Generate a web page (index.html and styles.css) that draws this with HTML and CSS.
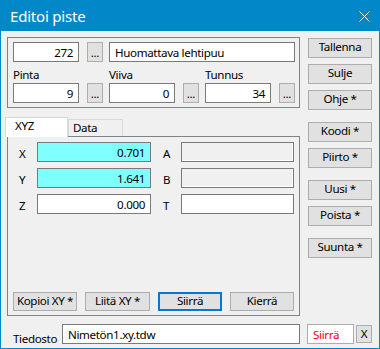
FILE: index.html
```html
<!DOCTYPE html>
<html>
<head>
<meta charset="utf-8">
<link rel="stylesheet" href="styles.css">
</head>
<body>
<div class="window">
  <div class="titlebar">
    <span class="title">Editoi piste</span>
    <svg class="close" width="11" height="11" viewBox="0 0 11 11"><path d="M0.5 0.5 L10.5 10.5 M10.5 0.5 L0.5 10.5" stroke="#fff" stroke-width="1" fill="none"/></svg>
  </div>
  <div class="frame">
    <div class="main">
      <div class="left">
        <div class="group">
          <div class="row1">
            <div class="field num w66">272</div>
            <div class="btn dots">...</div>
            <div class="field name">Huomattava lehtipuu</div>
          </div>
          <div class="row2">
            <div class="col">
              <div class="lbl">Pinta</div>
              <div class="pair"><div class="field num w66">9</div><div class="btn dots">...</div></div>
            </div>
            <div class="col">
              <div class="lbl">Viiva</div>
              <div class="pair"><div class="field num w66">0</div><div class="btn dots">...</div></div>
            </div>
            <div class="col">
              <div class="lbl">Tunnus</div>
              <div class="pair"><div class="field num w66">34</div><div class="btn dots">...</div></div>
            </div>
          </div>
        </div>
        <div class="tabs">
          <div class="tabstrip">
            <div class="tab active">XYZ</div>
            <div class="tab">Data</div>
          </div>
          <div class="panel">
            <div class="coords">
              <div class="clbl">X</div><div class="field num cyan">0.701</div>
              <div class="clbl lb2">A</div><div class="field dis"></div>
              <div class="clbl">Y</div><div class="field num cyan">1.641</div>
              <div class="clbl lb2">B</div><div class="field dis"></div>
              <div class="clbl">Z</div><div class="field num">0.000</div>
              <div class="clbl lb2">T</div><div class="field"></div>
            </div>
            <div class="pbtns">
              <div class="btn pb">Kopioi XY *</div>
              <div class="btn pb w65">Liitä XY *</div>
              <div class="btn pb focus">Siirrä</div>
              <div class="btn pb">Kierrä</div>
            </div>
          </div>
        </div>
      </div>
      <div class="right">
        <div class="bgroup">
          <div class="btn rb">Tallenna</div>
          <div class="btn rb">Sulje</div>
          <div class="btn rb">Ohje *</div>
        </div>
        <div class="bgroup">
          <div class="btn rb">Koodi *</div>
          <div class="btn rb">Piirto *</div>
        </div>
        <div class="bgroup">
          <div class="btn rb">Uusi *</div>
          <div class="btn rb">Poista *</div>
        </div>
        <div class="bgroup">
          <div class="btn rb">Suunta *</div>
        </div>
      </div>
    </div>
    <div class="footer">
      <div class="flbl">Tiedosto</div>
      <div class="field file">Nimetön1.xy.tdw</div>
      <div class="redbox">Siirrä</div>
      <div class="btn xbtn">X</div>
    </div>
  </div>
</div>
</body>
</html>
```

FILE: styles.css
```css
* { box-sizing: border-box; }
body {
  margin: 0;
  font-family: "Noto Sans", "Open Sans", sans-serif;
  font-size: 11.6px;
  letter-spacing: -0.35px;
  color: #000;
  background: #f0f0f0;
}
.window {
  width: 380px;
  height: 349px;
  display: flex;
  flex-direction: column;
  background: #f0f0f0;
}
.titlebar {
  height: 31px;
  flex: none;
  background: #0288c9;
  color: #fff;
  display: flex;
  align-items: center;
  justify-content: space-between;
  padding: 0 10px 0 10px;
}
.title { font-size: 15px; line-height: 20px; letter-spacing: -0.2px; }
.close { display: block; margin-top: 1px; }
.frame {
  flex: 1;
  border: 1px solid #0288c9;
  border-top: none;
  display: flex;
  flex-direction: column;
}
.main {
  display: flex;
  gap: 8px;
  padding: 6px 6px 0 6px;
}
.left {
  width: 293px;
  display: flex;
  flex-direction: column;
}
.group {
  height: 71px;
  border: 1px solid #828282;
  padding: 4px 0 0 5px;
}
.row1 { display: flex; height: 20px; }
.row2 { display: flex; gap: 6px; }
.col { display: flex; flex-direction: column; }
.lbl {
  height: 21px;
  line-height: 16px;
  display: flex;
  align-items: flex-end;
}
.pair { display: flex; }
.field {
  height: 20px;
  border: 1px solid #7a7a7a;
  background: #fff;
  line-height: 17px;
  padding: 1px 5px 0 5px;
  white-space: nowrap;
  overflow: hidden;
}
.num { text-align: right; }
.w66 { width: 66px; }
.name { width: 186px; margin-left: 6px; padding-left: 5px; }
.btn {
  background: #e1e1e1;
  border: 1px solid #adadad;
  text-align: center;
  white-space: nowrap;
}
.dots {
  width: 16px;
  height: 20px;
  margin-left: 8px;
  line-height: 19px;
}
.tabs { margin-top: 9px; }
.tabstrip {
  display: flex;
  align-items: flex-end;
  height: 19px;
  margin-left: -2px;
  position: relative;
  z-index: 1;
}
.tab {
  height: 17px;
  border: 1px solid #d9d9d9;
  border-bottom: none;
  background: #f0f0f0;
  line-height: 15px;
  padding: 0 0 0 4px;
  width: 55px;
}
.tab.active {
  width: 63px;
  height: 20px;
  margin-bottom: -1px;
  background: #fff;
  padding-left: 9px;
  line-height: 16px;
}
.panel {
  height: 180px;
  border: 1px solid #828282;
  display: flex;
  flex-direction: column;
  padding: 5px 0 4px 0;
}
.coords {
  display: grid;
  grid-template-columns: 29px 114px 30px 113px;
  grid-auto-rows: 20px;
  row-gap: 6px;
}
.clbl {
  padding-left: 11px;
  padding-top: 3px;
  line-height: 17px;
}
.lb2 { padding-left: 12px; }
.cyan { background: #80ffff; }
.dis {
  background: #f0f0f0;
  box-shadow: inset -1px -1px 0 #fff;
}
.pbtns {
  display: flex;
  gap: 8px;
  padding-left: 5px;
  margin-top: auto;
}
.pb {
  width: 64px;
  height: 19px;
  line-height: 16px;
}
.w65 { width: 65px; }
.focus { border: 2px solid #0078d7; line-height: 14px; }
.right {
  width: 64px;
  display: flex;
  flex-direction: column;
  gap: 12px;
  margin-top: 1px;
}
.bgroup { display: flex; flex-direction: column; gap: 6px; }
.rb {
  height: 20px;
  line-height: 16px;
}
.footer {
  display: flex;
  margin-top: 8px;
  padding-left: 12px;
  height: 20px;
}
.flbl {
  width: 49px;
  padding-top: 6px;
  line-height: 17px;
}
.file { width: 238px; padding-left: 5px; }
.redbox {
  width: 47px;
  height: 20px;
  margin-left: 7px;
  background: #fff;
  border: 1px solid #adadad;
  color: #ff0000;
  padding: 1px 0 0 5px;
  line-height: 17px;
}
.xbtn {
  width: 16px;
  height: 18px;
  margin-left: 2px;
  margin-top: 1px;
  line-height: 15px;
}
```
